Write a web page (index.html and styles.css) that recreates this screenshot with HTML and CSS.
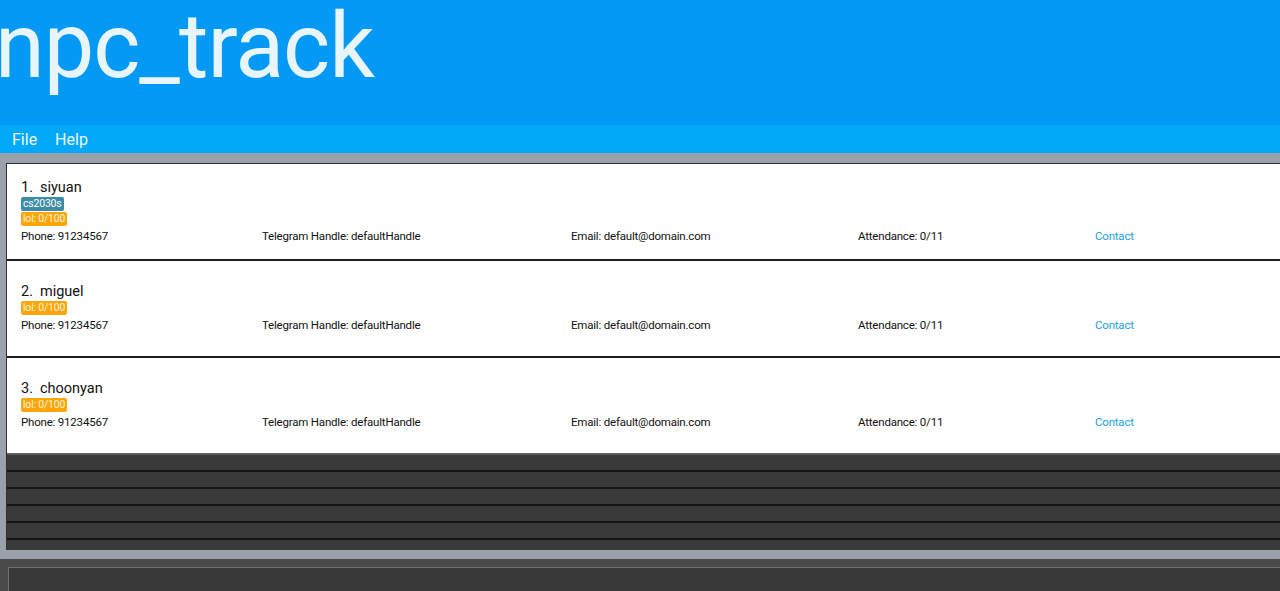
FILE: index.html
```html
<!DOCTYPE html>
<html>
<head>
<meta charset="utf-8">
<link rel="stylesheet" href="styles.css">
</head>
<body>
<div class="app">
  <header class="header"><h1 class="title">npc_track</h1></header>
  <nav class="menubar"><span class="menu-item">File</span><span class="menu-item">Help</span></nav>
  <main class="main">
    <div class="list">
      <div class="card">
        <div class="name"><span>1.</span><span>siyuan</span></div>
        <div class="tags"><span class="tag tag-blue">cs2030s</span><span class="tag tag-orange">lol: 0/100</span></div>
        <div class="info">
          <span>Phone: 91234567</span><span>Telegram Handle: defaultHandle</span><span>Email: default@domain.com</span><span>Attendance: 0/11</span><span class="contact">Contact</span>
        </div>
      </div>
      <div class="card">
        <div class="name"><span>2.</span><span>miguel</span></div>
        <div class="tags"><span class="tag tag-orange">lol: 0/100</span></div>
        <div class="info">
          <span>Phone: 91234567</span><span>Telegram Handle: defaultHandle</span><span>Email: default@domain.com</span><span>Attendance: 0/11</span><span class="contact">Contact</span>
        </div>
      </div>
      <div class="card card-last">
        <div class="name"><span>3.</span><span>choonyan</span></div>
        <div class="tags"><span class="tag tag-orange">lol: 0/100</span></div>
        <div class="info">
          <span>Phone: 91234567</span><span>Telegram Handle: defaultHandle</span><span>Email: default@domain.com</span><span>Attendance: 0/11</span><span class="contact">Contact</span>
        </div>
      </div>
      <div class="empty-row"></div>
      <div class="empty-row"></div>
      <div class="empty-row"></div>
      <div class="empty-row"></div>
      <div class="empty-row"></div>
      <div class="empty-row"></div>
    </div>
  </main>
  <section class="result"><div class="result-box"></div></section>
</div>
</body>
</html>
```
FILE: styles.css
```css
html, body {
  margin: 0;
  padding: 0;
}
body {
  width: 1280px;
  height: 591px;
  overflow: hidden;
  font-family: Roboto, "Liberation Sans", sans-serif;
  background: #383838;
}
.app {
  display: flex;
  flex-direction: column;
  height: 591px;
}
.header {
  height: 125px;
  flex: none;
  background: #0399f5;
  box-sizing: border-box;
  padding-left: 0;
}
.title {
  margin: 0;
  font-weight: 400;
  font-size: 90px;
  line-height: 94px;
  letter-spacing: -1px;
  color: #e8f5fd;
  text-indent: -5px;
  white-space: nowrap;
}
.menubar {
  height: 28px;
  flex: none;
  background: #02a9f9;
  display: flex;
  align-items: center;
  gap: 18px;
  padding-left: 12px;
  color: #eef8ff;
  font-size: 16px;
}
.main {
  flex: none;
  background: #9aa1aa;
  padding: 10px 0 9px 6px;
  height: 406px;
  box-sizing: border-box;
  overflow: hidden;
}
.list {
  width: 1300px;
  height: 387px;
  border-left: 1px solid #2e3135;
  border-top: 1px solid #2e3135;
  box-sizing: border-box;
  background: #3a3a3a;
  overflow: hidden;
}
.card {
  height: 97px;
  box-sizing: border-box;
  background: #fff;
  border-bottom: 2px solid #1e1e1e;
  padding-left: 14px;
  padding-bottom: 2px;
  display: flex;
  flex-direction: column;
  justify-content: center;
  color: #111;
}
.card-last {
  border-bottom: 2px solid #5a5c60;
}
.name {
  display: flex;
  gap: 7px;
  font-size: 14.5px;
  line-height: 18px;
}
.tags {
  display: flex;
  flex-direction: column;
  align-items: flex-start;
  gap: 1px;
}
.tag {
  font-size: 10.5px;
  line-height: 14px;
  height: 14px;
  padding: 0 2px;
  letter-spacing: -0.2px;
  border-radius: 2px;
  color: #fff;
}
.tag-blue {
  background: #3e8ba5;
}
.tag-orange {
  background: #fca60a;
  color: #fdf3dc;
}
.info {
  margin-top: 3px;
  display: grid;
  grid-template-columns: 241px 309px 287px 237px auto;
  font-size: 11.5px;
  letter-spacing: -0.2px;
  line-height: 14px;
}
.contact {
  color: #1ba0dd;
}
.empty-row {
  height: 15px;
  background: #3a3a3a;
  border-bottom: 2px solid #151515;
}
.result {
  flex: 1;
  background: #4a4a4a;
  padding: 8px 0 0 8px;
  display: flex;
}
.result-box {
  flex: 1;
  background: #383838;
  border-top: 1px solid #6f7072;
  border-left: 1px solid #6f7072;
}
```
